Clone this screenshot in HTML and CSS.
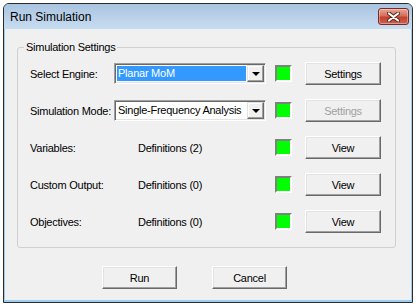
FILE: index.html
```html
<!DOCTYPE html>
<html>
<head>
<meta charset="utf-8">
<link rel="stylesheet" href="styles.css">
</head>
<body>
<div class="window">
  <div class="titlebar">
    <span class="title">Run Simulation</span>
    <div class="close">
      <svg width="13" height="10" viewBox="0 0 13 10">
        <path d="M2 1.5 L11 8.5 M11 1.5 L2 8.5" stroke="#5a2418" stroke-width="4" stroke-linecap="round"/>
        <path d="M2 1.5 L11 8.5 M11 1.5 L2 8.5" stroke="#ffffff" stroke-width="2.2" stroke-linecap="round"/>
      </svg>
    </div>
  </div>
  <div class="client">
    <div class="group">
      <div class="legend">Simulation Settings</div>
      <div class="rows">
        <div class="row">
          <span class="label">Select Engine:</span>
          <div class="combo">
            <div class="combo-text"><span class="selected">Planar MoM</span></div>
            <div class="drop"><span class="arrow"></span></div>
          </div>
          <span class="led"></span>
          <button class="btn">Settings</button>
        </div>
        <div class="row">
          <span class="label">Simulation Mode:</span>
          <div class="combo">
            <div class="combo-text"><span class="plain">Single-Frequency Analysis</span></div>
            <div class="drop"><span class="arrow"></span></div>
          </div>
          <span class="led"></span>
          <button class="btn" disabled>Settings</button>
        </div>
        <div class="row">
          <span class="label">Variables:</span>
          <span class="defs">Definitions (2)</span>
          <span class="led"></span>
          <button class="btn">View</button>
        </div>
        <div class="row">
          <span class="label">Custom Output:</span>
          <span class="defs">Definitions (0)</span>
          <span class="led"></span>
          <button class="btn">View</button>
        </div>
        <div class="row">
          <span class="label">Objectives:</span>
          <span class="defs">Definitions (0)</span>
          <span class="led"></span>
          <button class="btn">View</button>
        </div>
      </div>
    </div>
    <div class="actions">
      <button class="btn">Run</button>
      <button class="btn">Cancel</button>
    </div>
  </div>
</div>
</body>
</html>
```

FILE: styles.css
```css
html, body {
  margin: 0;
  padding: 0;
  background: #ffffff;
}
body {
  padding: 3px 0 0 3px;
  font-family: "Liberation Sans", Arial, sans-serif;
  font-size: 11px;
  letter-spacing: -0.25px;
  color: #000;
}
.window {
  width: 408px;
  height: 298px;
  border: 1px solid #2b2b2b;
  border-radius: 6px 6px 0 0;
  background: #9fcdf0;
  display: flex;
  flex-direction: column;
  overflow: hidden;
}
.titlebar {
  height: 25px;
  flex: none;
  display: flex;
  align-items: center;
  justify-content: space-between;
  padding: 0 3px 0 6px;
  background: linear-gradient(#a9c4e1, #bcd3ea 60%, #c6dcf1);
}
.title {
  font-size: 12px;
  letter-spacing: 0;
  color: #000;
}
.close {
  width: 29px;
  height: 15px;
  border: 1px solid #7a2a22;
  border-radius: 3px;
  background: linear-gradient(#e9a594, #d3705e 45%, #c2412f 55%, #cf6150);
  display: flex;
  align-items: center;
  justify-content: center;
  box-shadow: inset 0 0 0 1px rgba(255,255,255,0.35);
}
.client {
  flex: 1;
  margin: 0 1px 2px 1px;
  background: #f0f0f0;
  display: flex;
  flex-direction: column;
}
.group {
  position: relative;
  margin: 18px 0 0 12px;
  width: 377px;
  height: 199px;
  border: 1px solid #d0d0d0;
  border-radius: 3px;
}
.legend {
  position: absolute;
  top: -7px;
  left: 6px;
  padding: 0 2px;
  background: #f0f0f0;
  line-height: 13px;
}
.rows {
  display: flex;
  flex-direction: column;
  gap: 14px;
  padding: 14px 0 0 12px;
}
.row {
  display: flex;
  align-items: center;
  height: 23px;
}
.label {
  width: 84px;
  flex: none;
  white-space: nowrap;
}
.defs {
  width: 128px;
  padding-left: 24px;
  flex: none;
  white-space: nowrap;
}
.combo {
  width: 148px;
  height: 17px;
  flex: none;
  border: 1px solid;
  border-color: #a0a0a0 #ffffff #ffffff #a0a0a0;
  box-shadow: inset 1px 1px 0 #696969, inset -1px -1px 0 #e3e3e3;
  padding: 1px;
  background: #fff;
  display: flex;
  box-sizing: content-box;
}
.combo-text {
  flex: 1;
  display: flex;
  align-items: stretch;
  padding: 1px;
  overflow: hidden;
  white-space: nowrap;
}
.selected {
  flex: 1;
  background: #3399ff;
  color: #fff;
  padding-left: 1px;
  line-height: 15px;
}
.plain {
  flex: 1;
  padding-left: 1px;
  line-height: 15px;
}
.drop {
  flex: none;
  border: 1px solid;
  border-color: #e3e3e3 #696969 #696969 #e3e3e3;
  box-shadow: inset -1px -1px 0 #a0a0a0, inset 1px 1px 0 #fff;
  background: #f0f0f0;
  display: flex;
  align-items: center;
  justify-content: center;
  box-sizing: border-box;
  width: 17px;
  height: 17px;
}
.arrow {
  width: 0;
  height: 0;
  border-left: 4px solid transparent;
  border-right: 4px solid transparent;
  border-top: 4px solid #000;
  margin-top: 1px;
}
.led {
  width: 13px;
  height: 13px;
  flex: none;
  margin-left: 9px;
  background: #00ff00;
  border: 2px solid;
  border-color: #808080 #ffffff #ffffff #808080;
}
.btn {
  font-family: "Liberation Sans", Arial, sans-serif;
  font-size: 11px;
  letter-spacing: -0.25px;
  color: #000;
  width: 76px;
  height: 23px;
  flex: none;
  margin: 0 0 0 13px;
  padding: 0;
  background: #f0f0f0;
  border: 1px solid;
  border-color: #ffffff #696969 #696969 #ffffff;
  box-shadow: inset -1px -1px 0 #a0a0a0, inset 1px 1px 0 #e3e3e3;
  border-radius: 0;
}
.btn:disabled {
  color: #a0a0a0;
}
.actions {
  display: flex;
  gap: 35px;
  padding: 18px 0 0 97px;
}
.actions .btn {
  margin: 0;
  width: 75px;
}
```
